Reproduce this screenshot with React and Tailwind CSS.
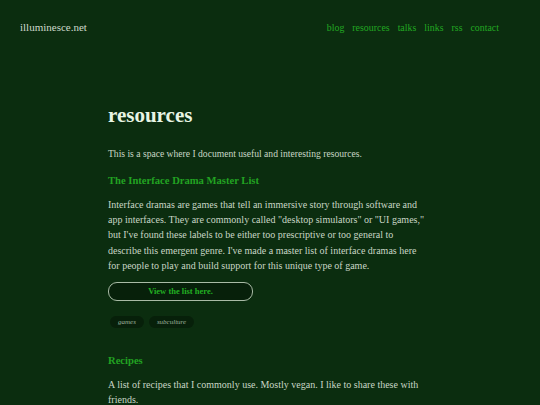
import React from "react";

const navLinks = ["blog", "resources", "talks", "links", "rss", "contact"];

const Tag = ({ label }) => (
  <span className="flex h-[12px] items-center rounded-full bg-[#07200a] px-[8px] text-[7px] italic text-[#9fb49f]">
    {label}
  </span>
);

const App = () => {
  return (
    <div
      className="min-h-[405px] w-full bg-[#0b2d0f] text-[#c9d6c6]"
      style={{ fontFamily: '"Liberation Serif", "DejaVu Serif", serif' }}
    >
      <header className="flex items-center justify-between pl-5 pr-[41px] pt-[18px]">
        <a className="text-[11px] text-[#cdd9cb]">illuminesce.net</a>
        <nav className="flex gap-[8px] pt-[3px] text-[9.9px] text-[#22a822]">
          {navLinks.map((l) => (
            <a key={l}>{l}</a>
          ))}
        </nav>
      </header>

      <main className="mx-auto w-[324px] pt-[66px]">
        <h1 className="text-[21px] font-bold leading-[26px] text-[#e8f5e4]">resources</h1>

        <p className="mt-[18px] text-[9.6px] leading-[15px]">
          This is a space where I document useful and interesting resources.
        </p>

        <h2 className="mt-[12px] text-[10.6px] font-bold leading-[16px] text-[#22a322]">
          The Interface Drama Master List
        </h2>

        <p className="mt-[8px] text-[10px] leading-[15.25px]">
          Interface dramas are games that tell an immersive story through software and
          <br />
          app interfaces. They are commonly called "desktop simulators" or "UI games,"
          <br />
          but I've found these labels to be either too prescriptive or too general to
          <br />
          describe this emergent genre. I've made a master list of interface dramas here
          <br />
          for people to play and build support for this unique type of game.
        </p>

        <a className="mt-[9px] flex h-[19px] w-[145px] items-center justify-center rounded-[9px] border border-[#a9bba6] bg-[#07200a] text-[8.5px] font-bold text-[#22b022]">
          View the list here.
        </a>

        <div className="mt-[15px] flex gap-[5px] pl-[2px]">
          <Tag label="games" />
          <Tag label="subculture" />
        </div>

        <h2 className="mt-[25px] text-[10.6px] font-bold leading-[16px] text-[#22a322]">Recipes</h2>

        <p className="mt-[8px] text-[10px] leading-[15.25px]">
          A list of recipes that I commonly use. Mostly vegan. I like to share these with
          <br />
          friends.
        </p>
      </main>
    </div>
  );
};

export default App;
